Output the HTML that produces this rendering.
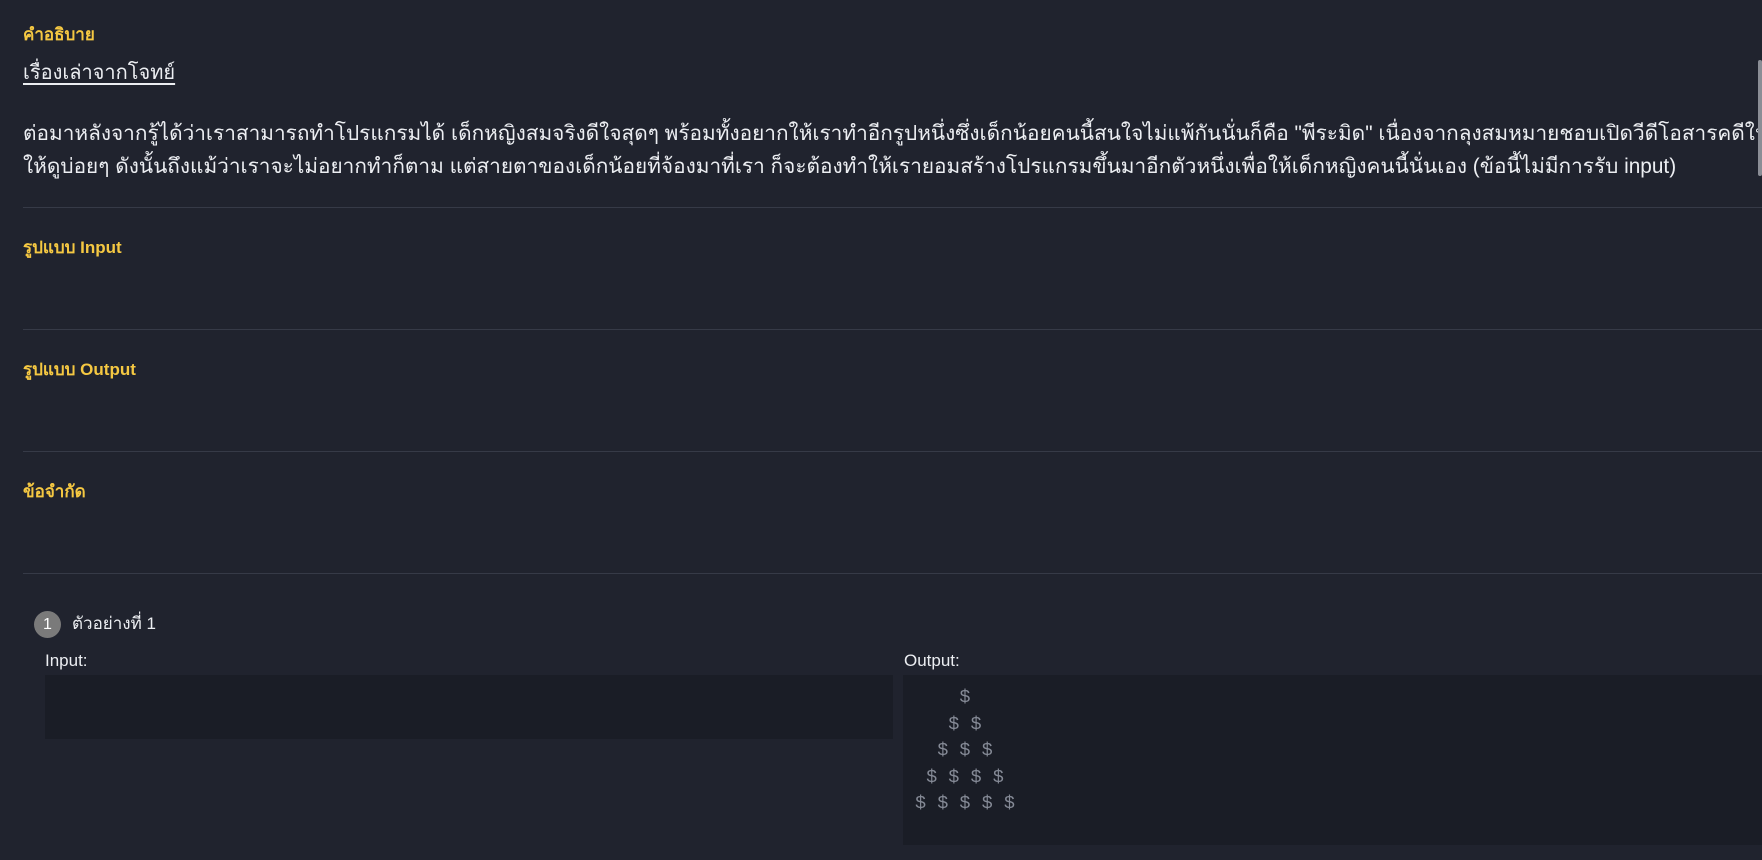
<!DOCTYPE html>
<html><head><meta charset="utf-8"><style>
html,body{margin:0;padding:0;background:#20232e;width:1762px;height:860px;overflow:hidden;font-family:"Liberation Sans","Noto Sans CJK SC",sans-serif;color:#eceef2;}
.h{position:absolute;left:23px;color:#f5c842;font-size:17px;font-weight:bold;line-height:20px;white-space:nowrap}
.hr{position:absolute;left:23px;right:0;height:1px;background:#363a47}
.title{position:absolute;left:23px;top:61px;font-size:20px;line-height:25px;text-decoration:underline;text-underline-offset:4px;white-space:nowrap}
.p{position:absolute;left:23px;top:117px;font-size:20.8px;line-height:33px;white-space:nowrap;width:1735px;overflow:hidden}
.sb{position:absolute;left:1758px;top:60px;width:4px;height:116px;background:#8a8d95;border-radius:2px}
.badge{position:absolute;left:34px;top:611px;width:27px;height:27px;border-radius:50%;background:#7a7a7a;color:#fff;font-size:16px;line-height:27px;text-align:center}
.lbl{position:absolute;font-size:17px;line-height:20px;white-space:nowrap}
.box{position:absolute;background:#1a1d26}
pre{margin:0;position:absolute;left:12px;top:10px;font-family:"Liberation Mono",monospace;font-size:18.5px;line-height:26.5px;color:#858a96}
</style></head><body>
<div class="h" style="top:25px">คำอธิบาย</div>
<div class="title">เรื่องเล่าจากโจทย์</div>
<div class="p">ต่อมาหลังจากรู้ได้ว่าเราสามารถทำโปรแกรมได้ เด็กหญิงสมจริงดีใจสุดๆ พร้อมทั้งอยากให้เราทำอีกรูปหนึ่งซึ่งเด็กน้อยคนนี้สนใจไม่แพ้กันนั่นก็คือ "พีระมิด" เนื่องจากลุงสมหมายชอบเปิดวีดีโอสารคดีให้ดู<br>ให้ดูบ่อยๆ ดังนั้นถึงแม้ว่าเราจะไม่อยากทำก็ตาม แต่สายตาของเด็กน้อยที่จ้องมาที่เรา ก็จะต้องทำให้เรายอมสร้างโปรแกรมขึ้นมาอีกตัวหนึ่งเพื่อให้เด็กหญิงคนนี้นั่นเอง (ข้อนี้ไม่มีการรับ input)</div>
<div class="sb"></div>
<div class="hr" style="top:207px"></div>
<div class="h" style="top:238px">รูปแบบ Input</div>
<div class="hr" style="top:329px"></div>
<div class="h" style="top:360px">รูปแบบ Output</div>
<div class="hr" style="top:451px"></div>
<div class="h" style="top:482px">ข้อจำกัด</div>
<div class="hr" style="top:573px"></div>
<div class="badge">1</div>
<div class="lbl" style="left:72px;top:614px">ตัวอย่างที่ 1</div>
<div class="lbl" style="left:45px;top:651px">Input:</div>
<div class="lbl" style="left:904px;top:651px">Output:</div>
<div class="box" style="left:45px;top:675px;width:848px;height:64px"></div>
<div class="box" style="left:903px;top:675px;width:859px;height:170px"><pre>    $
   $ $
  $ $ $
 $ $ $ $
$ $ $ $ $</pre></div>
</body></html>
